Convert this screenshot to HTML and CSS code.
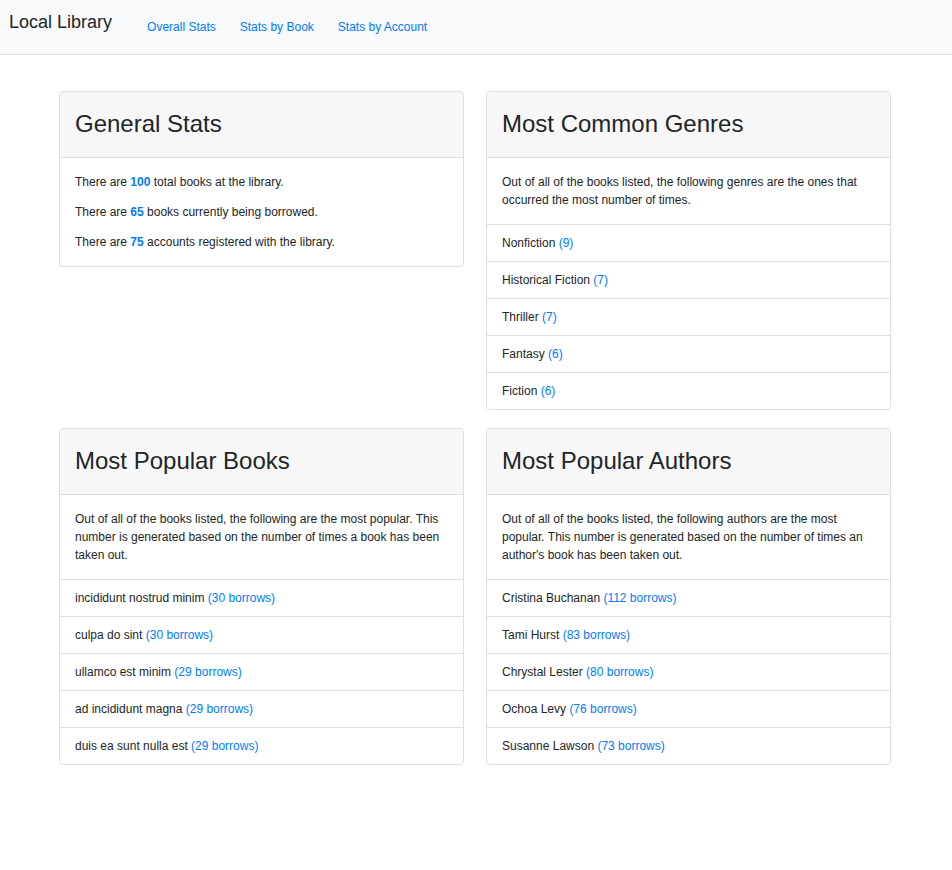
FILE: index.html
```html
<!DOCTYPE html>
<html>
<head>
<meta charset="utf-8">
<title>Local Library</title>
<link rel="stylesheet" href="styles.css">
</head>
<body>
<nav class="navbar">
  <a class="brand" href="#">Local Library</a>
  <ul class="nav">
    <li><a href="#">Overall Stats</a></li>
    <li><a href="#">Stats by Book</a></li>
    <li><a href="#">Stats by Account</a></li>
  </ul>
</nav>
<main class="grid">
  <section class="card">
    <header class="card-header"><h2>General Stats</h2></header>
    <div class="card-body">
      <p>There are <strong class="num">100</strong> total books at the library.</p>
      <p>There are <strong class="num">65</strong> books currently being borrowed.</p>
      <p>There are <strong class="num">75</strong> accounts registered with the library.</p>
    </div>
  </section>
  <section class="card">
    <header class="card-header"><h2>Most Common Genres</h2></header>
    <div class="card-body">
      <p>Out of all of the books listed, the following genres are the ones that occurred the most number of times.</p>
    </div>
    <ul class="list">
      <li>Nonfiction <span class="count">(9)</span></li>
      <li>Historical Fiction <span class="count">(7)</span></li>
      <li>Thriller <span class="count">(7)</span></li>
      <li>Fantasy <span class="count">(6)</span></li>
      <li>Fiction <span class="count">(6)</span></li>
    </ul>
  </section>
  <section class="card">
    <header class="card-header"><h2>Most Popular Books</h2></header>
    <div class="card-body">
      <p>Out of all of the books listed, the following are the most popular. This number is generated based on the number of times a book has been taken out.</p>
    </div>
    <ul class="list">
      <li>incididunt nostrud minim <span class="count">(30 borrows)</span></li>
      <li>culpa do sint <span class="count">(30 borrows)</span></li>
      <li>ullamco est minim <span class="count">(29 borrows)</span></li>
      <li>ad incididunt magna <span class="count">(29 borrows)</span></li>
      <li>duis ea sunt nulla est <span class="count">(29 borrows)</span></li>
    </ul>
  </section>
  <section class="card">
    <header class="card-header"><h2>Most Popular Authors</h2></header>
    <div class="card-body">
      <p>Out of all of the books listed, the following authors are the most popular. This number is generated based on the number of times an author's book has been taken out.</p>
    </div>
    <ul class="list">
      <li>Cristina Buchanan <span class="count">(112 borrows)</span></li>
      <li>Tami Hurst <span class="count">(83 borrows)</span></li>
      <li>Chrystal Lester <span class="count">(80 borrows)</span></li>
      <li>Ochoa Levy <span class="count">(76 borrows)</span></li>
      <li>Susanne Lawson <span class="count">(73 borrows)</span></li>
    </ul>
  </section>
</main>
</body>
</html>
```
FILE: styles.css
```css
* { box-sizing: border-box; }
html, body { margin: 0; padding: 0; background: #fff; }
body {
  font-family: "Liberation Sans", Arial, sans-serif;
  font-size: 12px;
  line-height: 18px;
  color: #212529;
}
a { color: #007bff; text-decoration: none; }

.navbar {
  display: flex;
  align-items: center;
  height: 55px;
  padding: 0 9px;
  background: #f8f9fa;
  border-bottom: 1px solid #dee2e6;
}
.brand {
  color: #212529;
  font-size: 18px;
  line-height: 27px;
  padding-bottom: 9px;
  margin-right: 23px;
}
.nav {
  display: flex;
  list-style: none;
  margin: 0;
  padding: 0;
}
.nav a {
  display: block;
  padding: 0 12px;
  font-size: 12px;
  line-height: 18px;
  color: #007bff;
}

.grid {
  display: grid;
  grid-template-columns: 405px 405px;
  column-gap: 22px;
  row-gap: 18px;
  align-items: start;
  padding: 36px 0 0 59px;
}
.card {
  border: 1px solid #dfdfdf;
  border-radius: 4px;
  background: #fff;
  overflow: hidden;
}
.card-header {
  background: #f7f7f7;
  border-bottom: 1px solid #dfdfdf;
  padding: 17px 15px 19px;
}
.card-header h2 {
  margin: 0;
  font-size: 24px;
  font-weight: 400;
  line-height: 29px;
  color: #212529;
}
.card-body { padding: 15px; }
.card-body p { margin: 0 0 12px; }
.card-body p:last-child { margin-bottom: 0; }
.num { color: #007bff; font-weight: 700; }

.list { list-style: none; margin: 0; padding: 0; }
.list li {
  border-top: 1px solid #dfdfdf;
  padding: 9px 15px;
}
.count { color: #007bff; }
```
